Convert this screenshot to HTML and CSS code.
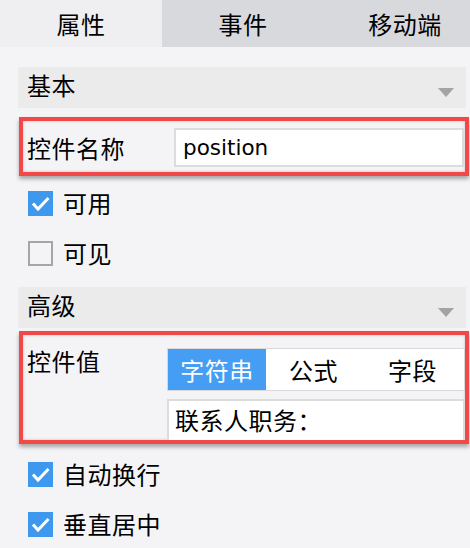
FILE: index.html
```html
<!DOCTYPE html>
<html lang="zh-CN">
<head>
<meta charset="utf-8">
<link rel="stylesheet" href="styles.css">
</head>
<body>
<div class="tabs">
  <div class="tab active">属性</div>
  <div class="tab">事件</div>
  <div class="tab">移动端</div>
</div>
<div class="panel">
  <div class="section-head">
    <span class="title">基本</span>
    <svg class="caret" width="16" height="9" viewBox="0 0 16 9"><polygon points="0,0 16,0 8,9" fill="#a3a3a3"/></svg>
  </div>
  <div class="mark mark-name">
    <div class="name-row">
      <span class="label">控件名称</span>
      <div class="input name-input">position</div>
    </div>
  </div>
  <div class="check-row first">
    <span class="cb checked"><svg width="25" height="25" viewBox="0 0 25 25"><polyline points="5,12.5 10,18 20.5,7" fill="none" stroke="#fff" stroke-width="3"/></svg></span>
    <span class="check-text">可用</span>
  </div>
  <div class="check-row">
    <span class="cb"></span>
    <span class="check-text">可见</span>
  </div>
  <div class="section-head adv">
    <span class="title">高级</span>
    <svg class="caret" width="16" height="9" viewBox="0 0 16 9"><polygon points="0,0 16,0 8,9" fill="#a3a3a3"/></svg>
  </div>
  <div class="mark mark-value">
    <div class="value-row">
      <span class="label value-label">控件值</span>
      <div class="value-col">
        <div class="segment">
          <span class="seg seg-active">字符串</span>
          <span class="seg seg-mid">公式</span>
          <span class="seg seg-last">字段</span>
        </div>
        <div class="input value-input">联系人职务：</div>
      </div>
    </div>
  </div>
  <div class="check-row after">
    <span class="cb checked"><svg width="25" height="25" viewBox="0 0 25 25"><polyline points="5,12.5 10,18 20.5,7" fill="none" stroke="#fff" stroke-width="3"/></svg></span>
    <span class="check-text">自动换行</span>
  </div>
  <div class="check-row">
    <span class="cb checked"><svg width="25" height="25" viewBox="0 0 25 25"><polyline points="5,12.5 10,18 20.5,7" fill="none" stroke="#fff" stroke-width="3"/></svg></span>
    <span class="check-text">垂直居中</span>
  </div>
</div>
</body>
</html>
```
FILE: styles.css
```css
html, body {
  margin: 0;
  padding: 0;
}
body {
  width: 470px;
  height: 548px;
  overflow: hidden;
  background: #f4f4f6;
  font-family: "Noto Sans CJK SC", "Noto Sans", sans-serif;
  font-size: 24px;
  color: #000;
  letter-spacing: 0.5px;
}
.tabs {
  display: flex;
  height: 47px;
  background: #d8d9dd;
  overflow: hidden;
}
.tab {
  flex: 0 0 162px;
  text-align: center;
  line-height: 47px;
}
.tab.active {
  background: #efeff2;
}
.panel {
  padding: 20px 1px 0 18px;
}
.section-head {
  box-sizing: border-box;
  width: 448px;
  height: 41px;
  background: #ebebeb;
  display: flex;
  align-items: center;
  justify-content: space-between;
  padding: 0 12px 0 9px;
}
.section-head .title {
  line-height: 24px;
  margin-top: -6px;
}
.section-head .caret {
  display: block;
  margin-top: 10px;
}
.section-head.adv {
  margin-top: 9px;
}
.mark {
  box-sizing: border-box;
  width: 450px;
  margin-left: 1px;
  border: 4px solid #f24848;
  box-shadow: 0 3px 4px rgba(0, 0, 0, 0.32), inset 0 0 3px rgba(0, 0, 0, 0.22);
}
.mark-name {
  margin-top: 9px;
  height: 59px;
}
.name-row {
  display: flex;
  padding: 7px 1px 0 4px;
}
.label {
  line-height: 39px;
}
.name-row .label {
  flex: 0 0 147px;
}
.input {
  box-sizing: border-box;
  background: #fff;
  border: 2px solid #dcdcdc;
}
.name-input {
  flex: 1;
  height: 39px;
  line-height: 35px;
  padding-left: 7px;
  font-family: "DejaVu Sans", sans-serif;
  font-size: 21.5px;
  letter-spacing: 0;
  color: #000;
}
.check-row {
  display: flex;
  align-items: center;
  height: 50px;
  padding-left: 10px;
}
.check-row.first {
  margin-top: 2px;
}
.check-row.after {
  margin-top: 5px;
}
.cb {
  box-sizing: border-box;
  flex: 0 0 25px;
  width: 25px;
  height: 25px;
  border: 2px solid #a6a6a6;
  margin-right: 10px;
}
.cb svg {
  display: block;
}
.cb.checked {
  border: none;
  background: #3d98ee;
}
.check-text {
  line-height: 28px;
}
.mark-value {
  margin-top: 3px;
  height: 113px;
}
.value-row {
  display: flex;
  padding: 0 0 0 4px;
}
.value-label {
  flex: 0 0 140px;
  line-height: 28px;
  margin-top: 12px;
}
.value-col {
  flex: 1;
  padding-top: 13px;
}
.segment {
  box-sizing: border-box;
  display: flex;
  height: 43px;
  border: 1px solid #d9d9d9;
  background: #fff;
}
.seg {
  line-height: 41px;
  text-align: center;
}
.seg-active {
  flex: 0 0 98px;
  background: #459ef3;
  color: #fff;
}
.seg-mid {
  flex: 0 0 95px;
}
.seg-last {
  flex: 1;
}
.value-input {
  margin-top: 8px;
  height: 41px;
  line-height: 37px;
  padding-left: 6px;
  border-bottom: none;
}
```
